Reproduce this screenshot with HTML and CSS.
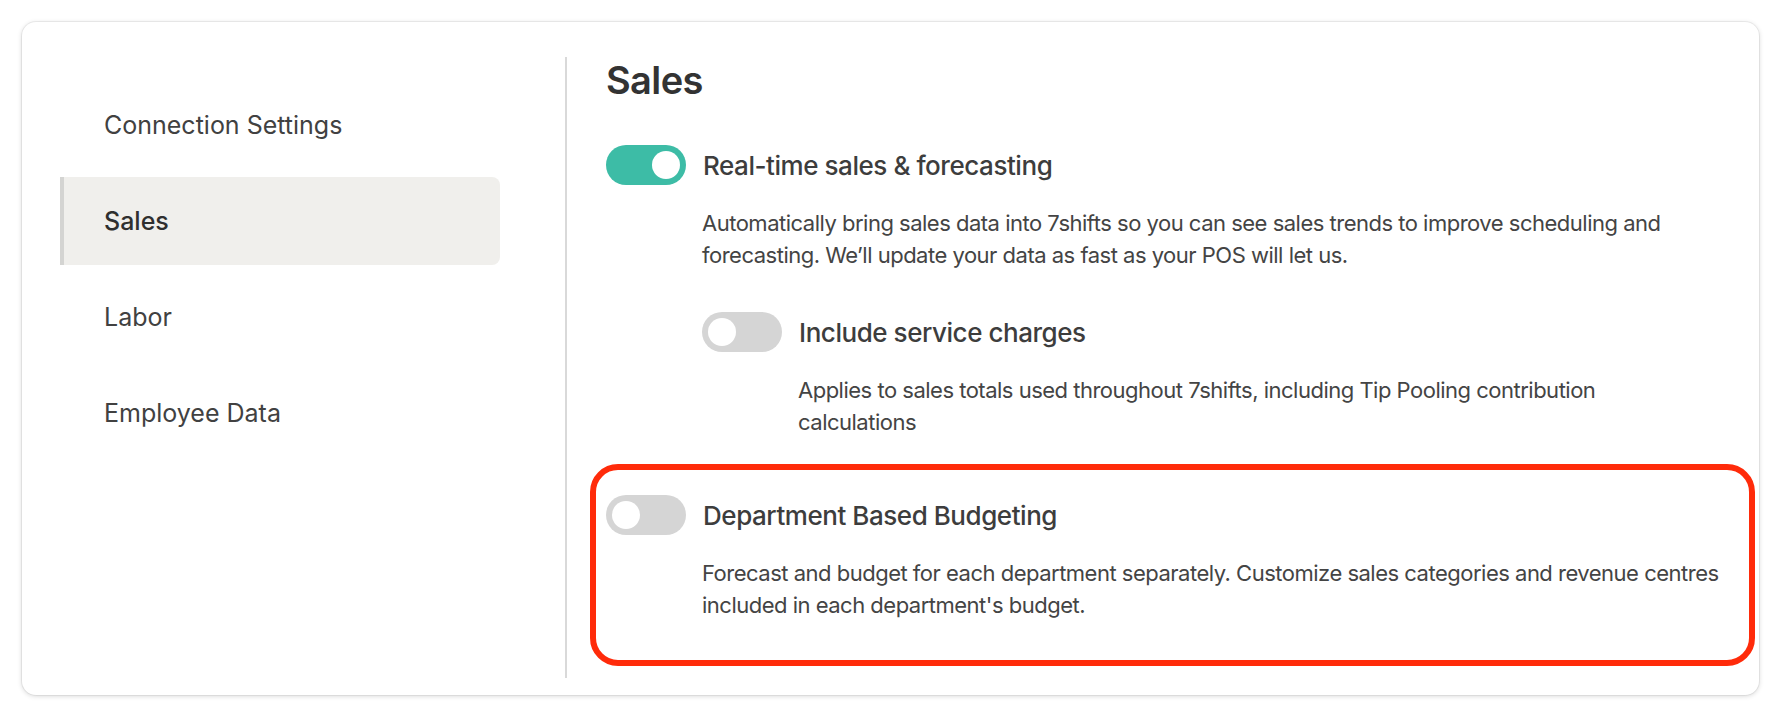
FILE: index.html
```html
<!DOCTYPE html>
<html lang="en">
<head>
<meta charset="utf-8">
<title>Sales settings</title>
<link rel="stylesheet" href="styles.css">
</head>
<body>
  <div class="card">
    <nav class="sidebar">
      <a class="nav-item">Connection Settings</a>
      <a class="nav-item active">Sales</a>
      <a class="nav-item">Labor</a>
      <a class="nav-item">Employee Data</a>
    </nav>
    <main class="content">
      <h1 class="heading">Sales</h1>

      <section class="setting">
        <div class="setting-row">
          <span class="toggle on"><span class="knob"></span></span>
          <span class="setting-title">Real-time sales &amp; forecasting</span>
        </div>
        <p class="setting-desc">Automatically bring sales data into 7shifts so you can see sales trends to improve scheduling and forecasting. We’ll update your data as fast as your POS will let us.</p>

        <div class="setting sub">
          <div class="setting-row">
            <span class="toggle"><span class="knob"></span></span>
            <span class="setting-title">Include service charges</span>
          </div>
          <p class="setting-desc">Applies to sales totals used throughout 7shifts, including Tip Pooling contribution calculations</p>
        </div>
      </section>

      <section class="setting highlighted">
        <div class="setting-row">
          <span class="toggle"><span class="knob"></span></span>
          <span class="setting-title">Department Based Budgeting</span>
        </div>
        <p class="setting-desc">Forecast and budget for each department separately. Customize sales categories and revenue centres included in each department's budget.</p>
      </section>
    </main>
  </div>
</body>
</html>
```

FILE: styles.css
```css
* {
  box-sizing: border-box;
}

html, body {
  margin: 0;
  background: #ffffff;
}

body {
  padding: 22px 23px 23px 22px;
  font-family: Inter, "Noto Sans", "Liberation Sans", sans-serif;
  color: #414141;
}

.card {
  display: flex;
  height: 673px;
  padding: 35px 39px 17px 38px;
  background: #ffffff;
  border-radius: 14px;
  box-shadow: 0 0 0 1px rgba(0, 0, 0, 0.05), 0 1px 5px rgba(0, 0, 0, 0.17);
}

.sidebar {
  width: 440px;
  flex: none;
  margin-right: 65px;
  padding-top: 24px;
  display: flex;
  flex-direction: column;
  gap: 8px;
}

.nav-item {
  display: flex;
  align-items: center;
  height: 88px;
  padding-left: 44px;
  font-size: 25px;
  letter-spacing: 0;
  color: #414141;
}

.nav-item.active {
  background: #f0efec;
  border-left: 4px solid #d4d4d2;
  padding-left: 40px;
  border-radius: 0 8px 8px 0;
  color: #2f2f2f;
  font-weight: 500;
}

.content {
  flex: 1;
  border-left: 2px solid #d9d9d9;
  padding-left: 39px;
}

.heading {
  margin: 0 0 42px;
  font-size: 38px;
  line-height: 46px;
  font-weight: 600;
  letter-spacing: -0.6px;
  color: #333333;
}

.setting-row {
  display: flex;
  align-items: center;
  gap: 17px;
  height: 40px;
}

.toggle {
  position: relative;
  flex: none;
  width: 80px;
  height: 40px;
  border-radius: 20px;
  background: #d5d5d5;
  display: flex;
  align-items: center;
  padding: 0 6px;
}

.toggle.on {
  background: #3dbca6;
  justify-content: flex-end;
}

.knob {
  width: 28px;
  height: 28px;
  border-radius: 50%;
  background: #ffffff;
}

.setting-title {
  font-size: 26px;
  font-weight: 500;
  letter-spacing: -0.45px;
  color: #3d3d3d;
}

.setting-desc {
  margin: 22px 0 0;
  padding-left: 96px;
  font-size: 22px;
  line-height: 32px;
  letter-spacing: -0.5px;
  color: #444444;
}

.setting.sub {
  margin-top: 41px;
  padding-left: 96px;
}

.setting.sub .setting-desc {
  padding-left: 96px;
  padding-right: 24px;
}

.highlighted {
  position: relative;
  margin-top: 57px;
}

.highlighted::before {
  content: "";
  position: absolute;
  top: -31px;
  left: -16px;
  right: -35px;
  bottom: -45px;
  border: 6px solid #ff2b0a;
  border-radius: 28px;
  pointer-events: none;
}
```
